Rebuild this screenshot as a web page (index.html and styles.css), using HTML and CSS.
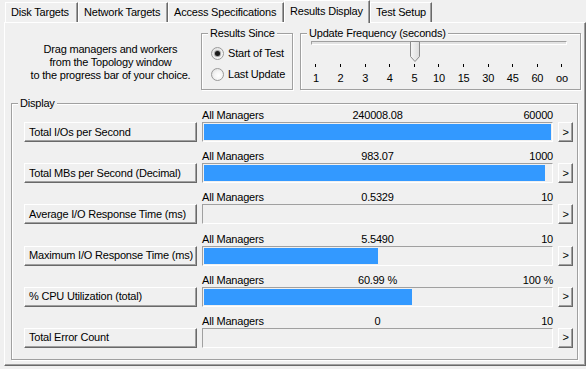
FILE: index.html
```html
<!DOCTYPE html>
<html>
<head>
<meta charset="utf-8">
<link rel="stylesheet" href="styles.css">
</head>
<body>
<div class="tabs">
  <div class="tab tab-disk">Disk Targets</div>
  <div class="tab tab-net">Network Targets</div>
  <div class="tab tab-access">Access Specifications</div>
  <div class="tab tab-results tab-active">Results Display</div>
  <div class="tab tab-setup">Test Setup</div>
</div>
<div class="panel">
  <div class="top-row">
    <p class="hint">Drag managers and workers<br>from the Topology window<br>to the progress bar of your choice.</p>
    <div class="group since">
      <span class="caption">Results Since</span>
      <div class="radio-row"><span class="radio checked"></span>Start of Test</div>
      <div class="radio-row"><span class="radio"></span>Last Update</div>
    </div>
    <div class="group freq">
      <span class="caption">Update Frequency (seconds)</span>
      <div class="slider">
        <div class="track"></div>
        <svg class="thumb" width="10" height="21" viewBox="0 0 10 21">
          <defs>
            <linearGradient id="tg" x1="0" y1="0" x2="1" y2="0">
              <stop offset="0" stop-color="#f6f6f6"/>
              <stop offset="1" stop-color="#dcdcdc"/>
            </linearGradient>
          </defs>
          <path d="M0.5 0.5H9.5V15.5L5 20.5L0.5 15.5Z" fill="url(#tg)" stroke="#8a8a8a"/>
        </svg>
      </div>
      <div class="scale">
        <span>1</span><span>2</span><span>3</span><span>4</span><span>5</span><span>10</span><span>15</span><span>30</span><span>45</span><span>60</span><span>oo</span>
      </div>
    </div>
  </div>
  <div class="group display">
    <span class="caption">Display</span>
    <div class="metrics">
      <div class="metric">
        <div class="meta"><span>All Managers</span><span>240008.08</span><span class="max">60000</span></div>
        <button class="metric-btn">Total I/Os per Second</button>
        <div class="bar"><div class="fill" style="width:347px"></div></div>
        <button class="more">&gt;</button>
      </div>
      <div class="metric">
        <div class="meta"><span>All Managers</span><span>983.07</span><span class="max">1000</span></div>
        <button class="metric-btn">Total MBs per Second (Decimal)</button>
        <div class="bar"><div class="fill" style="width:341px"></div></div>
        <button class="more">&gt;</button>
      </div>
      <div class="metric">
        <div class="meta"><span>All Managers</span><span>0.5329</span><span class="max">10</span></div>
        <button class="metric-btn">Average I/O Response Time (ms)</button>
        <div class="bar"><div class="fill" style="width:0px"></div></div>
        <button class="more">&gt;</button>
      </div>
      <div class="metric">
        <div class="meta"><span>All Managers</span><span>5.5490</span><span class="max">10</span></div>
        <button class="metric-btn">Maximum I/O Response Time (ms)</button>
        <div class="bar"><div class="fill" style="width:174px"></div></div>
        <button class="more">&gt;</button>
      </div>
      <div class="metric">
        <div class="meta"><span>All Managers</span><span>60.99 %</span><span class="max">100 %</span></div>
        <button class="metric-btn">% CPU Utilization (total)</button>
        <div class="bar"><div class="fill" style="width:208px"></div></div>
        <button class="more">&gt;</button>
      </div>
      <div class="metric">
        <div class="meta"><span>All Managers</span><span>0</span><span class="max">10</span></div>
        <button class="metric-btn">Total Error Count</button>
        <div class="bar"><div class="fill" style="width:0px"></div></div>
        <button class="more">&gt;</button>
      </div>
    </div>
  </div>
</div>
</body>
</html>
```

FILE: styles.css
```css
* { box-sizing: border-box; }
html, body { margin: 0; background: #f0f0f0; }
body {
  font: 11px/13px "Liberation Sans", Arial, sans-serif;
  letter-spacing: -0.2px;
  color: #000;
  width: 586px;
  height: 369px;
  overflow: hidden;
}

/* tabs */
.tabs {
  display: flex;
  align-items: flex-end;
  height: 22px;
  padding-left: 5px;
}
.tab {
  height: 20px;
  padding: 0 0 0 5px;
  border-top: 1px solid #fff;
  border-left: 1px solid #fff;
  border-right: 1px solid #696969;
  box-shadow: inset -1px 0 #a0a0a0;
  line-height: 19px;
  white-space: nowrap;
  overflow: hidden;
}
.tab-disk { width: 73px; }
.tab-net { width: 90px; }
.tab-access { width: 116px; }
.tab-results { width: 86px; }
.tab-setup { width: 62px; }
.tab-active {
  height: 23px;
  margin-bottom: -1px;
  position: relative;
  z-index: 1;
  background: #f0f0f0;
  line-height: 21px;
}

/* panel */
.panel {
  height: 344px;
  margin-left: 4px;
  border: 1px solid;
  border-color: #fff #696969 #696969 #fff;
  box-shadow: inset -1px -1px #a0a0a0;
  padding-left: 6px;
}
.top-row { display: flex; align-items: flex-start; }
.hint {
  width: 190px;
  margin: 20px 0 0 0;
  padding-left: 9px;
  text-align: center;
}

.group {
  position: relative;
  border: 1px solid #a0a0a0;
  box-shadow: inset 1px 1px #fff, 1px 1px #fff;
}
.caption {
  position: absolute;
  top: -7px;
  left: 6px;
  padding: 0 2px;
  background: #f0f0f0;
  line-height: 13px;
  white-space: nowrap;
}

.since {
  width: 92px;
  height: 57px;
  margin-top: 10px;
  padding: 9px 0 0 9px;
}
.radio-row {
  display: flex;
  align-items: center;
  gap: 4px;
  height: 21px;
  white-space: nowrap;
}
.radio {
  position: relative;
  width: 13px;
  height: 13px;
  border-radius: 50%;
  border: 1px solid #9a9a9a;
  background: radial-gradient(circle at 60% 60%, #ffffff 0%, #f4f4f4 45%, #d8d8d8 100%);
  flex: none;
}
.radio.checked::after {
  content: "";
  position: absolute;
  left: 3px;
  top: 3px;
  width: 5px;
  height: 5px;
  border-radius: 50%;
  background: #1a1a1a;
  box-shadow: 0 0 1px 1px #9a9a9a;
}

.freq {
  width: 281px;
  height: 57px;
  margin-top: 10px;
  margin-left: 7px;
}
.slider {
  position: relative;
  width: 256px;
  height: 21px;
  margin: 7px 0 0 10px;
}
.track {
  margin-top: 7px;
  height: 4px;
  border-top: 1px solid #a0a0a0;
  border-left: 1px solid #a0a0a0;
  border-bottom: 1px solid #fff;
  border-right: 1px solid #fff;
  background: #e3e3e3;
}
.thumb {
  position: absolute;
  left: 99px;
  top: 0;
}
.scale {
  display: grid;
  grid-template-columns: repeat(11, 24.6px);
  margin: 2px 0 0 2.7px;
}
.scale span {
  text-align: center;
}
.scale span::before {
  content: "";
  display: block;
  width: 1px;
  height: 3px;
  margin: 0 auto 5px;
  background: #000;
}

/* display group */
.display {
  width: 567px;
  height: 257px;
  margin-top: 13px;
  padding: 5px 0 0 12px;
}
.metrics {
  display: flex;
  flex-direction: column;
  gap: 8.2px;
}
.metric {
  display: grid;
  grid-template-columns: 173px 351px 15px;
  grid-template-rows: 13px 20px;
  column-gap: 5px;
}
.meta {
  grid-column: 2;
  grid-row: 1;
  display: grid;
  grid-template-columns: 1fr auto 1fr;
  white-space: nowrap;
}
.meta .max { text-align: right; }

.metric-btn, .more {
  grid-row: 2;
  height: 20px;
  margin: 0;
  font: inherit;
  letter-spacing: inherit;
  color: #000;
  background: #f0f0f0;
  border: 1px solid;
  border-color: #fff #696969 #696969 #fff;
  box-shadow: inset -1px -1px #a0a0a0;
  border-radius: 0;
}
.metric-btn {
  grid-column: 1;
  text-align: left;
  padding: 0 0 0 4px;
  white-space: nowrap;
}
.more {
  grid-column: 3;
  padding: 0;
  text-align: center;
}
.bar {
  grid-column: 2;
  grid-row: 2;
  border: 1px solid;
  border-color: #a0a0a0 #fff #fff #a0a0a0;
  padding: 1px;
}
.fill {
  height: 100%;
  background: #3399ff;
}
```
